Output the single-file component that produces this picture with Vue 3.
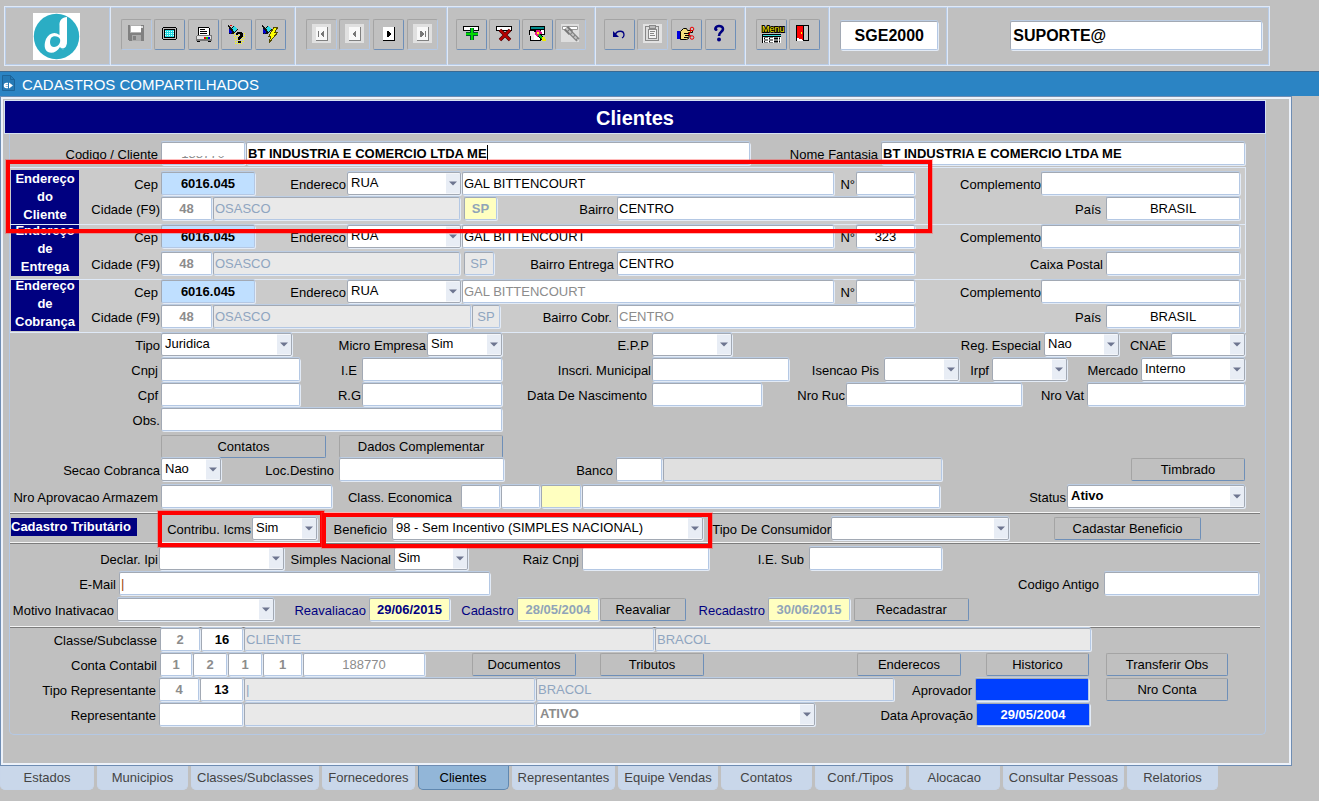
<script setup>
const L = (text, id, cls = '') => ({ t: 'label', text, id, cls })
const F = (id, name, v = '', cls = '') => ({ t: 'input', id, name, v, cls })
const S = (id, name, v = '', cls = '') => ({ t: 'select', id, name, v, cls })
const B = (text) => ({ t: 'button', text })
const G = () => ({ t: 'gap' })

const addressTop = (p, number, cls) => [
  L('Cep', p + '-cep'), F(p + '-cep', 'Cep', '6016.045', 'c b sky'),
  L('Endereco', p + '-tipo', 'tight'), S(p + '-tipo', 'Tipo de endereco', 'RUA'),
  F(p + '-rua', 'Endereco', 'GAL BITTENCOURT', cls),
  L('N°', p + '-num', 'tight'), F(p + '-num', 'Numero', number, 'c'),
  L('Complemento', p + '-comp', 'flush'), F(p + '-comp', 'Complemento')
]
const city = (p) => [
  L('Cidade (F9)', p + '-cid', 'tight'), F(p + '-cid', 'Codigo da cidade', '48', 'c b dim'),
  F(p + '-cidn', 'Cidade', 'OSASCO', 'ro')
]

const sections = [
  { kind: 'head', rows: [
    { cls: 'r-codigo', cells: [
      L('Codigo / Cliente', 'codigo'), { ...F('codigo', 'Codigo', '188770', 'c dim'), over: 'patch' },
      { ...F('cliente', 'Cliente', 'BT INDUSTRIA E COMERCIO LTDA ME', 'b'), over: 'caret' },
      L('Nome Fantasia', 'fantasia'), F('fantasia', 'Nome Fantasia', 'BT INDUSTRIA E COMERCIO LTDA ME', 'b')
    ] }
  ] },
  { kind: 'address first', tag: 'Endereço do Cliente', rows: [
    { cls: 'r-cep', cells: addressTop('cli', '', '') },
    { cls: 'r-cid1', cells: [...city('cli'), G(), F('cli-uf', 'UF', 'SP', 'c b soft yellow'),
      L('Bairro', 'cli-bairro'), F('cli-bairro', 'Bairro', 'CENTRO'),
      L('País', 'cli-pais', 'wide'), F('cli-pais', 'País', 'BRASIL', 'c')] }
  ] },
  { kind: 'address second', tag: 'Endereço de Entrega', rows: [
    { cls: 'r-cep', cells: addressTop('ent', '323', '') },
    { cls: 'r-cid2', cells: [...city('ent'), G(), F('ent-uf', 'UF', 'SP', 'c ro'),
      L('Bairro Entrega', 'ent-bairro'), F('ent-bairro', 'Bairro Entrega', 'CENTRO'),
      L('Caixa Postal', 'ent-caixa'), F('ent-caixa', 'Caixa Postal')] }
  ] },
  { kind: 'address third', tag: 'Endereço de Cobrança', rows: [
    { cls: 'r-cep', cells: addressTop('cob', '', 'dim') },
    { cls: 'r-cid3', cells: [...city('cob'), F('cob-uf', 'UF', 'SP', 'c ro'),
      L('Bairro Cobr.', 'cob-bairro', 'wide'), F('cob-bairro', 'Bairro Cobr.', 'CENTRO', 'dim'),
      L('País', 'cob-pais', 'wide'), F('cob-pais', 'País', 'BRASIL', 'c')] }
  ] },
  { kind: 'dados', rows: [
    { cls: 'r-tipo', cells: [
      L('Tipo', 'tipo', 'tight'), S('tipo', 'Tipo', 'Juridica'),
      L('Micro Empresa', 'micro', 'tight'), S('micro', 'Micro Empresa', 'Sim'),
      L('E.P.P', 'epp'), S('epp', 'E.P.P'),
      L('Reg. Especial', 'reg'), S('reg', 'Reg. Especial', 'Nao'),
      L('CNAE', 'cnae', 'wide'), S('cnae', 'CNAE')] },
    { cls: 'r-cnpj', cells: [
      L('Cnpj', 'cnpj'), F('cnpj', 'Cnpj'), L('I.E', 'ie', 'wide'), F('ie', 'I.E'),
      L('Inscri. Municipal', 'im', 'tight'), F('im', 'Inscri. Municipal'),
      L('Isencao Pis', 'pis', 'wide'), S('pis', 'Isencao Pis'),
      L('Irpf', 'irpf'), S('irpf', 'Irpf'), L('Mercado', 'mercado'), S('mercado', 'Mercado', 'Interno')] },
    { cls: 'r-cpf', cells: [
      L('Cpf', 'cpf'), F('cpf', 'Cpf'), L('R.G', 'rg', 'tight'), F('rg', 'R.G'),
      L('Data De Nascimento', 'nasc', 'wide'), F('nasc', 'Data De Nascimento'),
      L('Nro Ruc', 'ruc', 'tight'), F('ruc', 'Nro Ruc'), L('Nro Vat', 'vat'), F('vat', 'Nro Vat')] },
    { cls: 'r-obs', cells: [L('Obs.', 'obs', 'tight'), F('obs', 'Obs.')] },
    { cls: 'r-botoes', cells: [G(), B('Contatos'), G(), B('Dados Complementar')] },
    { cls: 'r-secao', cells: [
      L('Secao Cobranca', 'secao', 'tight'), S('secao', 'Secao Cobranca', 'Nao'),
      L('Loc.Destino', 'loc', 'wide'), F('loc', 'Loc.Destino'),
      L('Banco', 'banco'), F('banco', 'Banco'), F('bancon', 'Nome do banco', '', 'ro bank'), G(), B('Timbrado')] },
    { cls: 'r-nro', cells: [
      L('Nro Aprovacao Armazem', 'armazem'), F('armazem', 'Nro Aprovacao Armazem'),
      L('Class. Economica', 'ce1', 'far'), F('ce1', 'Class. Economica 1'), F('ce2', 'Class. Economica 2'),
      F('ce3', 'Class. Economica 3', '', 'yellow'), F('ce4', 'Class. Economica 4'),
      L('Status', 'status', 'tight'), S('status', 'Status', 'Ativo', 'b')] }
  ] },
  { kind: 'tributario ruled', rows: [
    { cls: 'r-contribu', cells: [
      { t: 'tag', text: 'Cadastro Tributário' },
      L('Contribu. Icms', 'icms', 'tight'), S('icms', 'Contribu. Icms', 'Sim'),
      L('Beneficio', 'benef', 'wide'), S('benef', 'Beneficio', '98 - Sem Incentivo (SIMPLES NACIONAL)'),
      L('Tipo De Consumidor', 'consumidor', 'flush'), S('consumidor', 'Tipo De Consumidor'),
      G(), B('Cadastar Beneficio')] }
  ] },
  { kind: 'fiscal ruled', rows: [
    { cls: 'r-declar', cells: [
      L('Declar. Ipi', 'ipi', 'tight'), S('ipi', 'Declar. Ipi'),
      L('Simples Nacional', 'simples'), S('simples', 'Simples Nacional', 'Sim'),
      L('Raiz Cnpj', 'raiz'), F('raiz', 'Raiz Cnpj'), L('I.E. Sub', 'iesub', 'wide'), F('iesub', 'I.E. Sub')] },
    { cls: 'r-email', cells: [
      L('E-Mail', 'email'), F('email', 'E-Mail', '|', 'brown'),
      L('Codigo Antigo', 'antigo', 'wide'), F('antigo', 'Codigo Antigo')] },
    { cls: 'r-motivo', cells: [
      L('Motivo Inativacao', 'motivo'), S('motivo', 'Motivo Inativacao'),
      L('Reavaliacao', 'reav', 'navy'), F('reav', 'Reavaliacao', '29/06/2015', 'c b navy yellow'),
      L('Cadastro', 'cad', 'navy'), F('cad', 'Cadastro', '28/05/2004', 'c b soft yellow'), B('Reavaliar'),
      L('Recadastro', 'recad', 'navy'), F('recad', 'Recadastro', '30/06/2015', 'c b soft yellow'), G(), B('Recadastrar')] }
  ] },
  { kind: 'classe ruled', rows: [
    { cls: 'r-classe', cells: [
      L('Classe/Subclasse', 'classe'), F('classe', 'Classe', '2', 'c b dim'), F('sub', 'Subclasse', '16', 'c b'),
      F('classen', 'Nome da classe', 'CLIENTE', 'ro'), F('subn', 'Nome da subclasse', 'BRACOL', 'ro')] },
    { cls: 'r-conta', cells: [
      L('Conta Contabil', 'c1'), F('c1', 'Conta 1', '1', 'c b dim'), F('c2', 'Conta 2', '2', 'c b dim'),
      F('c3', 'Conta 3', '1', 'c b dim'), F('c4', 'Conta 4', '1', 'c b dim'), F('c5', 'Conta 5', '188770', 'c dim'),
      G(), B('Documentos'), G(), B('Tributos'), G(), B('Enderecos'), G(), B('Historico'), G(), B('Transferir Obs')] },
    { cls: 'r-tiporep', cells: [
      L('Tipo Representante', 't1'), F('t1', 'Tipo', '4', 'c b dim'), F('t2', 'Subtipo', '13', 'c b'),
      F('t3', 'Nome do tipo', '|', 'ro'), F('t4', 'Nome do subtipo', 'BRACOL', 'ro'),
      L('Aprovador', 'aprovador'), F('aprovador', 'Aprovador', '', 'blue'), G(), B('Nro Conta')] },
    { cls: 'r-rep', cells: [
      L('Representante', 'rep'), F('rep', 'Representante'), F('repn', 'Nome do representante', '', 'ro'),
      S('situacao', 'Situacao', 'ATIVO', 'b dim'),
      L('Data Aprovação', 'dataap'), F('dataap', 'Data Aprovação', '29/05/2004', 'c b blue')] }
  ] }
]

const tabs = ['Estados', 'Municipios', 'Classes/Subclasses', 'Fornecedores', 'Clientes', 'Representantes',
  'Equipe Vendas', 'Contatos', 'Conf./Tipos', 'Alocacao', 'Consultar Pessoas', 'Relatorios']
</script>

<template>
  <div class="app">
    <header class="toolbar">
      <div class="group brand">
        <svg class="logo" viewBox="0 0 47 47" role="img" aria-label="Logo">
          <rect width="47" height="47" fill="#fff" />
          <circle cx="23.500" cy="23.500" r="22.700" fill="#2badc4" />
          <path d="M26.500 13C26 7 29 4.500 34 4v24c0 4-.500 6-2 8-2 1-4 0-5-2-3 5-8 7-12 5-4-2-4-8-2-13 3-6 9-8 13.500-4Z" fill="#fff" />
          <path d="M18 25c2-3 8-2 9 1 1 4-2 8-6 8s-5-5-3-9Z" fill="#2badc4" />
          <path d="M27 34c3 3 6 1 7-3 0 3 0 5-2 6-2 0-4-1-5-3Z" fill="#2badc4" />
        </svg>
      </div>
      <div class="group">
        <button class="tool off" type="button" aria-label="Salvar">
          <svg viewBox="0 0 31 31" shape-rendering="crispEdges">
            <path d="M7 6h15l1 1v15H8l-1-1Z" fill="#808080" /><path d="M9 6h11v8H9z" fill="#b0b0b0" /><path d="M10 7h10v6H10z" fill="#fff" />
            <path d="M11 16h9v6h-9z" fill="#aaa" /><path d="M12 17h3v4h-3z" fill="#808080" /><path d="M20 7h2v2h-2z" fill="#ddd" />
          </svg>
        </button>
        <button class="tool" type="button" aria-label="Tela">
          <svg viewBox="0 0 31 31" shape-rendering="crispEdges">
            <path d="M9 8h13v1h1v11h-1v1H9v-1H8V9h1z" /><path d="M9 9h13v11H9z" fill="#b8b8b8" /><path d="M10 10h11v9H10z" /><path d="M11 11h9v7h-9z" fill="#20d8e0" />
            <path d="M11 12.500h9M11 14.500h9M11 16.500h9" stroke="#d8ffff" stroke-dasharray="1 1" />
          </svg>
        </button>
        <button class="tool" type="button" aria-label="Imprimir">
          <svg viewBox="0 0 31 31" shape-rendering="crispEdges">
            <path d="M10 8h10l2 2v7H10z" /><path d="M11 9h9l1 1v7H11z" fill="#fff" /><path d="M12 10h5v1h-5zM12 12h7v1h-7zM12 14h7v1h-7z" />
            <path d="M9 16h15v6H8v-5Z" fill="#777" /><path d="M9 17h14v3H9z" fill="#e4e4e4" />
            <path d="M16 18h2v2h-2z" fill="#e00" /><path d="M18 18h2v2h-2z" fill="#0c0" /><path d="M20 18h2v2h-2z" fill="#00e" /><path d="M9 22h3v1H9zM20 22h3v1h-3z" />
          </svg>
        </button>
        <button class="tool" type="button" aria-label="Entrar consulta">
          <svg viewBox="0 0 31 31" shape-rendering="crispEdges">
            <path d="M7 6l3 3 3-2 4 4-5 4H8V9Z" fill="#111" /><path d="M11 9l3-2 2 3-3 3Z" fill="#2cdce8" /><path d="M8 10l3 3-1 2-2-1Z" fill="#00c" /><path d="M9 6h2v1H9z" fill="#d00" />
            <path d="M13 14.500h11M13 16.500h11M13 18.500h11M14 20.500h10M14 22.500h9M14 24.500h8" stroke="#ff0" stroke-dasharray="1 1" />
            <path d="M15 16v-2l2-1h3l2 2v3l-3 2v1h-2v-3l2-1v-2h-2v1ZM17 22h3v2h-3z" />
          </svg>
        </button>
        <button class="tool" type="button" aria-label="Executar consulta">
          <svg viewBox="0 0 31 31" shape-rendering="crispEdges">
            <path d="M7 6l3 3 3-2 4 4-5 4H8V9Z" fill="#111" /><path d="M11 9l3-2 2 3-3 3Z" fill="#2cdce8" /><path d="M8 10l3 3-1 2-2-1Z" fill="#00c" />
            <path d="M19 8h4l-3 5h3l-9 11 2-7h-2Z" fill="#ff0" stroke="#554c00" />
          </svg>
        </button>
      </div>
      <div class="group">
        <button class="tool off" type="button" aria-label="Primeiro">
          <svg viewBox="0 0 31 31" shape-rendering="crispEdges"><path d="M6 5h19v19H6z" fill="#e0e0e0" /><path d="M10 8h12v14H10z" fill="#808080" /><path d="M10 8h11v13H10z" fill="#f8f8f8" /><path d="M12 12h1v6h-1zM18 12v6h-1l-3-3 3-3Z" fill="#777" /></svg>
        </button>
        <button class="tool off" type="button" aria-label="Anterior">
          <svg viewBox="0 0 31 31" shape-rendering="crispEdges"><path d="M6 5h19v19H6z" fill="#e0e0e0" /><path d="M10 8h12v14H10z" fill="#808080" /><path d="M10 8h11v13H10z" fill="#f8f8f8" /><path d="M17 12v6h-1l-3-3 3-3Z" fill="#777" /></svg>
        </button>
        <button class="tool" type="button" aria-label="Proximo">
          <svg viewBox="0 0 31 31" shape-rendering="crispEdges"><path d="M10 8h12v14H10z" /><path d="M10 8h11v13H10z" fill="#fff" /><path d="M14 12v6h1l3-3-3-3Z" /></svg>
        </button>
        <button class="tool off" type="button" aria-label="Ultimo">
          <svg viewBox="0 0 31 31" shape-rendering="crispEdges"><path d="M6 5h19v19H6z" fill="#e0e0e0" /><path d="M10 8h12v14H10z" fill="#808080" /><path d="M10 8h11v13H10z" fill="#f8f8f8" /><path d="M18 12h1v6h-1zM13 12v6h1l3-3-3-3Z" fill="#777" /></svg>
        </button>
      </div>
      <div class="group edit">
        <button class="tool" type="button" aria-label="Inserir">
          <svg viewBox="0 0 31 31" shape-rendering="crispEdges"><path d="M7 7h16v5H7z" /><path d="M8 8h14v3H8z" fill="#fff" /><path d="M14 9h4v4h4v4h-4v4h-4v-4h-4v-4h4z" fill="#053" /><path d="M15 9h2v5h5v2h-5v5h-2v-5h-5v-2h5z" fill="#00d800" /></svg>
        </button>
        <button class="tool" type="button" aria-label="Excluir">
          <svg viewBox="0 0 31 31"><path d="M7 7h16v5H7z" /><path d="M8 8h14v3H8z" fill="#fff" /><path d="M11 11l10 10M21 11L11 21" stroke="#400" stroke-width="3.500" /><path d="M11 11l10 10M21 11L11 21" stroke="#b80000" stroke-width="2.200" /></svg>
        </button>
        <button class="tool" type="button" aria-label="Editar">
          <svg viewBox="0 0 31 31" shape-rendering="crispEdges">
            <path d="M8 7h15v9H8z" /><path d="M9 8h13v2H9z" fill="#088" /><path d="M9 11h13v4H9z" fill="#fff" /><path d="M7 11h12v11H8v-6H7z" /><path d="M8 12h3l3 3v6H9z" fill="#e8e8e8" /><path d="M12 16h6v5h-6z" fill="#fff" />
            <path d="M14 11h4l2 3-2 4h-3l-2-3Z" fill="#e0188c" /><path d="M15 13h2v2h-2z" fill="#ff0" /><path d="M17 16l4 4" stroke="#000" stroke-width="4" /><path d="M17 16l4 4" stroke="#0b2" stroke-width="2" /><path d="M20 18h3l1 4h-4Z" fill="#ee0" />
          </svg>
        </button>
        <button class="tool off" type="button" aria-label="Limpar">
          <svg viewBox="0 0 31 31"><path d="M6 5h18v18H6z" fill="#dedede" /><path d="M7.500 7.500h15v3h-15z" fill="#fff" stroke="#999" /><path d="M11 9l5 5" stroke="#777" stroke-width="6" /><path d="M15 13l8 8" stroke="#808080" stroke-width="4.500" /><path d="M11 9l12 12" stroke="#c4c4c4" stroke-width="2" stroke-dasharray="3 1" /></svg>
        </button>
      </div>
      <div class="group edit">
        <button class="tool" type="button" aria-label="Desfazer">
          <svg viewBox="0 0 31 31"><path d="M9 12v6h6Z" fill="#000080" /><path d="M11 16c2-5 9-5 9 0 0 1 0 2-2 3" fill="none" stroke="#000080" stroke-width="1.300" /></svg>
        </button>
        <button class="tool off" type="button" aria-label="Colar">
          <svg viewBox="0 0 31 31" shape-rendering="crispEdges"><path d="M6 5h19v19H6z" fill="#e2e2e2" /><path d="M8.500 7.500h13v14h-13z" fill="#ddd" stroke="#888" /><path d="M11 10h8v9h-8z" fill="#f4f4f4" stroke="#888" /><path d="M12 6h6v3h-6z" fill="#bbb" stroke="#888" /><path d="M13 12h5M13 14h4M13 16h5" stroke="#888" /></svg>
        </button>
        <button class="tool" type="button" aria-label="Recortar">
          <svg viewBox="0 0 31 31"><path d="M6 12h3v8H6z" fill="#00d" /><path d="M9.500 12.500l3-3h3l1 2h5v2h-4l1 2-1 4-2 1h-6Z" fill="#f3df7c" stroke="#000" /><path d="M13 14.500h5M14 16.500h4M13 18.500h4" stroke="#000" /><circle cx="21" cy="10" r="1.800" fill="none" stroke="#e00" /><circle cx="21" cy="18.500" r="1.800" fill="none" stroke="#e00" /><path d="M20 11l-2 5M20 17l-3-2" stroke="#e00" /></svg>
        </button>
        <button class="tool" type="button" aria-label="Ajuda">
          <svg viewBox="0 0 31 31"><path d="M10.500 10.500C9 6.500 18 5.500 18 10c0 3-4 2.500-4 7" fill="none" stroke="#000080" stroke-width="2.600" /><circle cx="11" cy="10.500" r="1.500" fill="#000080" /><circle cx="14" cy="20.500" r="2" fill="#000080" /></svg>
        </button>
      </div>
      <div class="group">
        <button class="tool" type="button" aria-label="Menu">
          <svg viewBox="0 0 31 31"><text x="6" y="13" font-size="9" class="menu-word">Menu</text><path d="M6 15h19v2H6z" /><path d="M7 16h18v1H7z" fill="#3dd" /><path d="M6 17h19v7H6z" /><path d="M7 18h18v6H7z" fill="#fff" /><path d="M8 19.500h16M8 22.500h16" stroke="#000" stroke-width="2" stroke-dasharray="4 1" /><path d="M9 19.500h3M14 19.500h3M9 22.500h3M14 22.500h3" stroke="#fff" /></svg>
        </button>
        <button class="tool" type="button" aria-label="Sair">
          <svg viewBox="0 0 31 31" shape-rendering="crispEdges"><path d="M7 6h13v16H7z" /><path d="M15 7h4v14h-4z" fill="#c8c8c8" /><path d="M8 7h6v14l-6-2Z" fill="#f00" /><path d="M8 19l6 2v1H8Z" fill="#fff" /><path d="M12 13h1v2h-1z" fill="#ff0" /></svg>
        </button>
      </div>
      <div class="group"><input class="field c b big" aria-label="Sistema" value="SGE2000"></div>
      <div class="group user"><input class="field b big" aria-label="Usuario" value="SUPORTE@"></div>
    </header>

    <div class="titlebar">
      <svg viewBox="0 0 13 16" aria-hidden="true"><path d="M.5.500h8l4 4v11H.5Z" fill="#2579b5" stroke="#1d6499" /><path d="M8.500.500v4h4" fill="none" stroke="#1d6499" /><path d="M6 8.500H4.500a2 2 0 0 0 0 4H6M2 10.500h4" fill="none" stroke="#fff" stroke-width="1.500" /><path d="M7 7.500l4 3-4 3Z" fill="#fff" /></svg>
      <span>CADASTROS COMPARTILHADOS</span>
    </div>

    <main class="panel">
      <h1>Clientes</h1>
      <form class="frame" @submit.prevent>
        <section v-for="s in sections" :key="s.kind" :class="s.kind">
          <div v-if="s.tag" class="side"><span>{{ s.tag }}</span></div>
          <div class="rows">
            <div v-for="r in s.rows" :key="r.cls" class="row" :class="r.cls">
              <template v-for="(c, i) in r.cells" :key="i">
                <label v-if="c.t === 'label'" :for="c.id" :class="c.cls">{{ c.text }}</label>
                <div v-else-if="c.t === 'input'" class="cell">
                  <input :id="c.id" class="field" :class="c.cls" :aria-label="c.name" :value="c.v">
                  <span v-if="c.over" :class="c.over"></span>
                </div>
                <div v-else-if="c.t === 'select'" class="cell">
                  <select :id="c.id" class="field" :class="c.cls" :aria-label="c.name"><option>{{ c.v }}</option></select>
                  <svg class="arrow" viewBox="0 0 14 20" aria-hidden="true"><path d="M0 0h14v20H0z" fill="#e8edf5" /><path d="M3 8h8l-4 4Z" fill="#6d7590" /></svg>
                </div>
                <button v-else-if="c.t === 'button'" type="button" class="action">{{ c.text }}</button>
                <strong v-else-if="c.t === 'tag'" class="tag">{{ c.text }}</strong>
                <span v-else></span>
              </template>
            </div>
          </div>
        </section>
        <div class="mark mark-address"></div>
        <div class="mark mark-icms"></div>
        <div class="mark mark-benefit"></div>
      </form>
    </main>

    <nav class="tabs">
      <button v-for="t in tabs" :key="t" type="button" :class="{ active: t === 'Clientes' }">{{ t }}</button>
    </nav>
  </div>
</template>

<style>
body { background: #c0c0c0; }
</style>

<style scoped>
.app, .app * { box-sizing: border-box; }
.app {
  min-height: 100vh;
  background: #c0c0c0;
  color: #000;
  font: 13px/16px "Liberation Sans", Arial, sans-serif;
  overflow: hidden;
}
button, input, select { font: inherit; color: inherit; margin: 0; padding: 0; border-radius: 0; }

.toolbar {
  display: grid;
  grid-template-columns: 106fr 185fr 152fr 148fr 151fr 84fr 118fr 321fr;
  height: 60px;
  margin: 6px 49px 5px 4px;
  border: 1px solid #dfe9f7;
  box-shadow: inset 0 0 0 1px #b9cce6;
}
.group {
  display: flex;
  align-items: flex-start;
  justify-content: space-between;
  min-width: 0;
  padding: 12px 9px 0 10px;
  border-right: 1px solid #dfe9f7;
  box-shadow: -1px 0 0 #b9cce6 inset;
}
.group:last-child { border-right: 0; box-shadow: none; }
.group.edit { padding-left: 8px; }
.group.user { padding-left: 62px; padding-right: 7px; }
.group.brand { justify-content: center; padding: 6px 2px 0 0; }
.logo { width: 47px; height: 47px; }
.tool {
  width: 31px;
  height: 31px;
  flex: none;
  background: transparent;
  border: 1px solid #a4a4a4;
  border-right: 1px solid #6e8fb8;
  border-bottom: 1px solid #6e8fb8;
  border-radius: 2px;
}
.tool.off { border-right-color: #b4c8e4; border-bottom-color: #b4c8e4; }
.tool svg { display: block; width: 31px; height: 31px; margin: -1px; }
.menu-word {
  font-family: "Liberation Sans", Arial, sans-serif;
  fill: #ffee00;
  stroke: #000;
  stroke-width: 2px;
  paint-order: stroke;
}

.titlebar {
  display: flex;
  align-items: center;
  gap: 7px;
  height: 25px;
  padding: 2px 2px 0;
  border-top: 1px solid #3a6a94;
  background: #2b84c4;
  color: #fff;
  font-size: 15px;
}
.titlebar svg { width: 13px; height: 16px; margin-bottom: 4px; }

.panel {
  margin-right: 27px;
  padding: 3px 25px 30px 3px;
  border: 1px solid #6f8db3;
  box-shadow: inset 0 0 0 2px #edf2fa;
}
h1 {
  margin: 0;
  height: 34px;
  border: 1px solid #d5e1f2;
  background: #000080;
  color: #fff;
  font-size: 20px;
  line-height: 34px;
  text-align: center;
}
.frame {
  position: relative;
  margin: 0 0 0 5px;
  padding: 8px 5px 6px 0;
  border: 1px solid #b4c8e4;
  border-top: 0;
  border-radius: 0 0 5px 5px;
}
.row { display: grid; height: 25px; }
.row > * { min-width: 0; }

.address {
  display: flex;
  margin-right: 14px;
  padding-left: 1px;
  border-top: 1px solid #dfe9f7;
  border-right: 1px solid #dfe9f7;
  background: #cbcbcb;
}
.address .rows { flex: 1; min-width: 0; }
.side {
  display: flex;
  justify-content: center;
  flex: none;
  width: 68px;
  margin-right: 1px;
  background: #000080;
  color: #fff;
  font-weight: 700;
  line-height: 18px;
  text-align: center;
  overflow: hidden;
}
.side span { width: min-content; height: 54px; }
.first { padding-top: 2px; }
.first .rows { padding-top: 2px; }
.second { height: 55px; }
.second .side { align-items: flex-end; margin-bottom: 3px; }
.second .rows { display: grid; gap: 2px; align-content: start; }
.third { height: 54px; border-bottom: 1px solid #dfe9f7; }
.third .side { align-items: flex-end; margin-bottom: 1px; }

.ruled { border-top: 1px solid #f4f4f4; box-shadow: inset 0 1px 0 #7c7c7c; padding-top: 4px; }
.tributario { margin-top: 2px; }
.fiscal { padding-bottom: 3px; }
.fiscal .r-motivo { margin-top: 1px; }
.classe { padding-top: 1px; }
.r-botoes { padding-top: 2px; }
.r-nro { margin-top: 2px; }

.r-codigo { grid-template-columns: 151fr 85fr 505fr 130fr 365fr 14fr; }
.r-cep { grid-template-columns: 81fr 95fr 91fr 115fr 373fr 21fr 60fr 125fr 200fr 4fr; }
.r-cid1 { grid-template-columns: 81fr 52fr 248fr 3fr 34fr 119fr 299fr 190fr 135fr 4fr; }
.r-cid2 { grid-template-columns: 81fr 52fr 248fr 3fr 31fr 122fr 299fr 190fr 135fr 4fr; }
.r-cid3 { grid-template-columns: 81fr 52fr 259fr 29fr 116fr 299fr 190fr 135fr 4fr; }
.r-tipo { grid-template-columns: 151fr 132fr 134fr 76fr 149fr 81fr 311fr 76fr 51fr 75fr 14fr; }
.r-cnpj { grid-template-columns: 151fr 140fr 61fr 141fr 149fr 138fr 94fr 76fr 32fr 76fr 73fr 105fr 14fr; }
.r-cpf { grid-template-columns: 151fr 140fr 61fr 141fr 149fr 111fr 83fr 177fr 64fr 159fr 14fr; }
.r-obs { grid-template-columns: 151fr 342fr 757fr; }
.r-botoes { grid-template-columns: 151fr 166fr 12fr 165fr 756fr; }
.r-secao { grid-template-columns: 151fr 61fr 117fr 166fr 111fr 47fr 280fr 188fr 115fr 14fr; }
.r-nro { grid-template-columns: 151fr 172fr 128fr 40fr 40fr 41fr 359fr 126fr 179fr 14fr; }
.r-contribu { grid-template-columns: 127fr 115fr 66fr 74fr 312fr 127fr 179fr 44fr 148fr 58fr; }
.r-declar { grid-template-columns: 149fr 126fr 109fr 75fr 113fr 128fr 99fr 134fr 317fr; }
.r-email { grid-template-columns: 109fr 372fr 613fr 156fr; }
.r-motivo { grid-template-columns: 107fr 158fr 94fr 82fr 66fr 83fr 87fr 81fr 83fr 3fr 116fr 290fr; }
.r-classe { grid-template-columns: 150fr 41fr 43fr 411fr 437fr 168fr; }
.r-conta { grid-template-columns: 150fr 33fr 35fr 35fr 40fr 123fr 46fr 105fr 23fr 105fr 152fr 105fr 24fr 104fr 16fr 123fr 31fr; }
.r-tiporep { grid-template-columns: 149fr 41fr 44fr 292fr 359fr 80fr 115fr 16fr 123fr 31fr; }
.r-rep { grid-template-columns: 149fr 85fr 292fr 280fr 160fr 115fr 169fr; }

label {
  padding: 5px 3px 0 0;
  text-align: right;
  white-space: nowrap;
}
label.tight { padding-right: 1px; }
label.flush { padding-right: 0; }
label.wide { padding-right: 5px; }
label.far { padding-right: 9px; }

.cell { position: relative; padding-right: 1px; }
.field {
  display: block;
  width: 100%;
  height: 23px;
  padding: 0 1px 1px;
  border: 1px solid #a2a9b4;
  border-right-color: #b4c8e4;
  border-bottom-color: #b4c8e4;
  border-radius: 2px;
  outline: 0;
  background: #fff;
  box-shadow: 1px 1px 0 #e3ebf6, 0 -1px 0 #bccde3;
}
select.field {
  appearance: none;
  padding: 0 16px 1px 3px;
  border-color: #a2a9b4;
}
.arrow { position: absolute; top: 1px; right: 2px; width: 14px; height: 21px; pointer-events: none; }
.c { text-align: center; }
.b { font-weight: 700; }
.navy { color: #000080; }
.dim { color: #8c8c8c; }
.soft { color: #90a4b8; }
.brown { color: #9c4a10; }
.sky { background: #bfdfff; }
.yellow { background: #ffffc0; }
.ro { background: #e9e9e9; color: #8fa5c0; }
.bank { background: #e0e0e0; }
.blue { background: #0040ff; color: #fff; }
.big { height: 29px; padding: 0 2px; font-size: 16px; margin-top: 2px; }
.patch { position: absolute; left: 8px; right: 12px; top: 2px; height: 12px; background: #fff; }
.caret { position: absolute; left: 241px; top: 3px; width: 1px; height: 15px; background: #000; }

.action {
  height: 23px;
  padding: 0;
  margin-right: 1px;
  border: 1px solid #a4a4a4;
  border-right-color: #6e8fb8;
  border-bottom-color: #6e8fb8;
  border-radius: 2px;
  background: #c0c0c0;
  white-space: nowrap;
}
.tag {
  height: 18px;
  margin: 1px 0 0 1px;
  background: #000080;
  color: #fff;
  line-height: 18px;
  white-space: nowrap;
}

.mark { position: absolute; border: 4px solid #f00; box-shadow: 0 0 0 1px rgba(255, 60, 60, 0.35); pointer-events: none; }
.mark-address { top: 26px; left: -4px; width: 73.8%; height: 73px; }
.mark-icms { top: 377px; left: 11.8%; width: 13.2%; height: 36px; }
.mark-benefit { top: 379px; left: 24.9%; width: 31%; height: 35px; }

.tabs { display: flex; gap: 3px; }
.tabs button {
  min-width: 91px;
  height: 24px;
  padding: 0 5px;
  border: 1px solid #c8d6ea;
  border-top: 0;
  border-radius: 0 0 5px 5px;
  background: #c9d7ea;
  color: #444;
  white-space: nowrap;
}
.tabs button:first-child { min-width: 94px; }
.tabs button.active { background: #92b6d8; border-color: #6088b0; color: #000; }
</style>
